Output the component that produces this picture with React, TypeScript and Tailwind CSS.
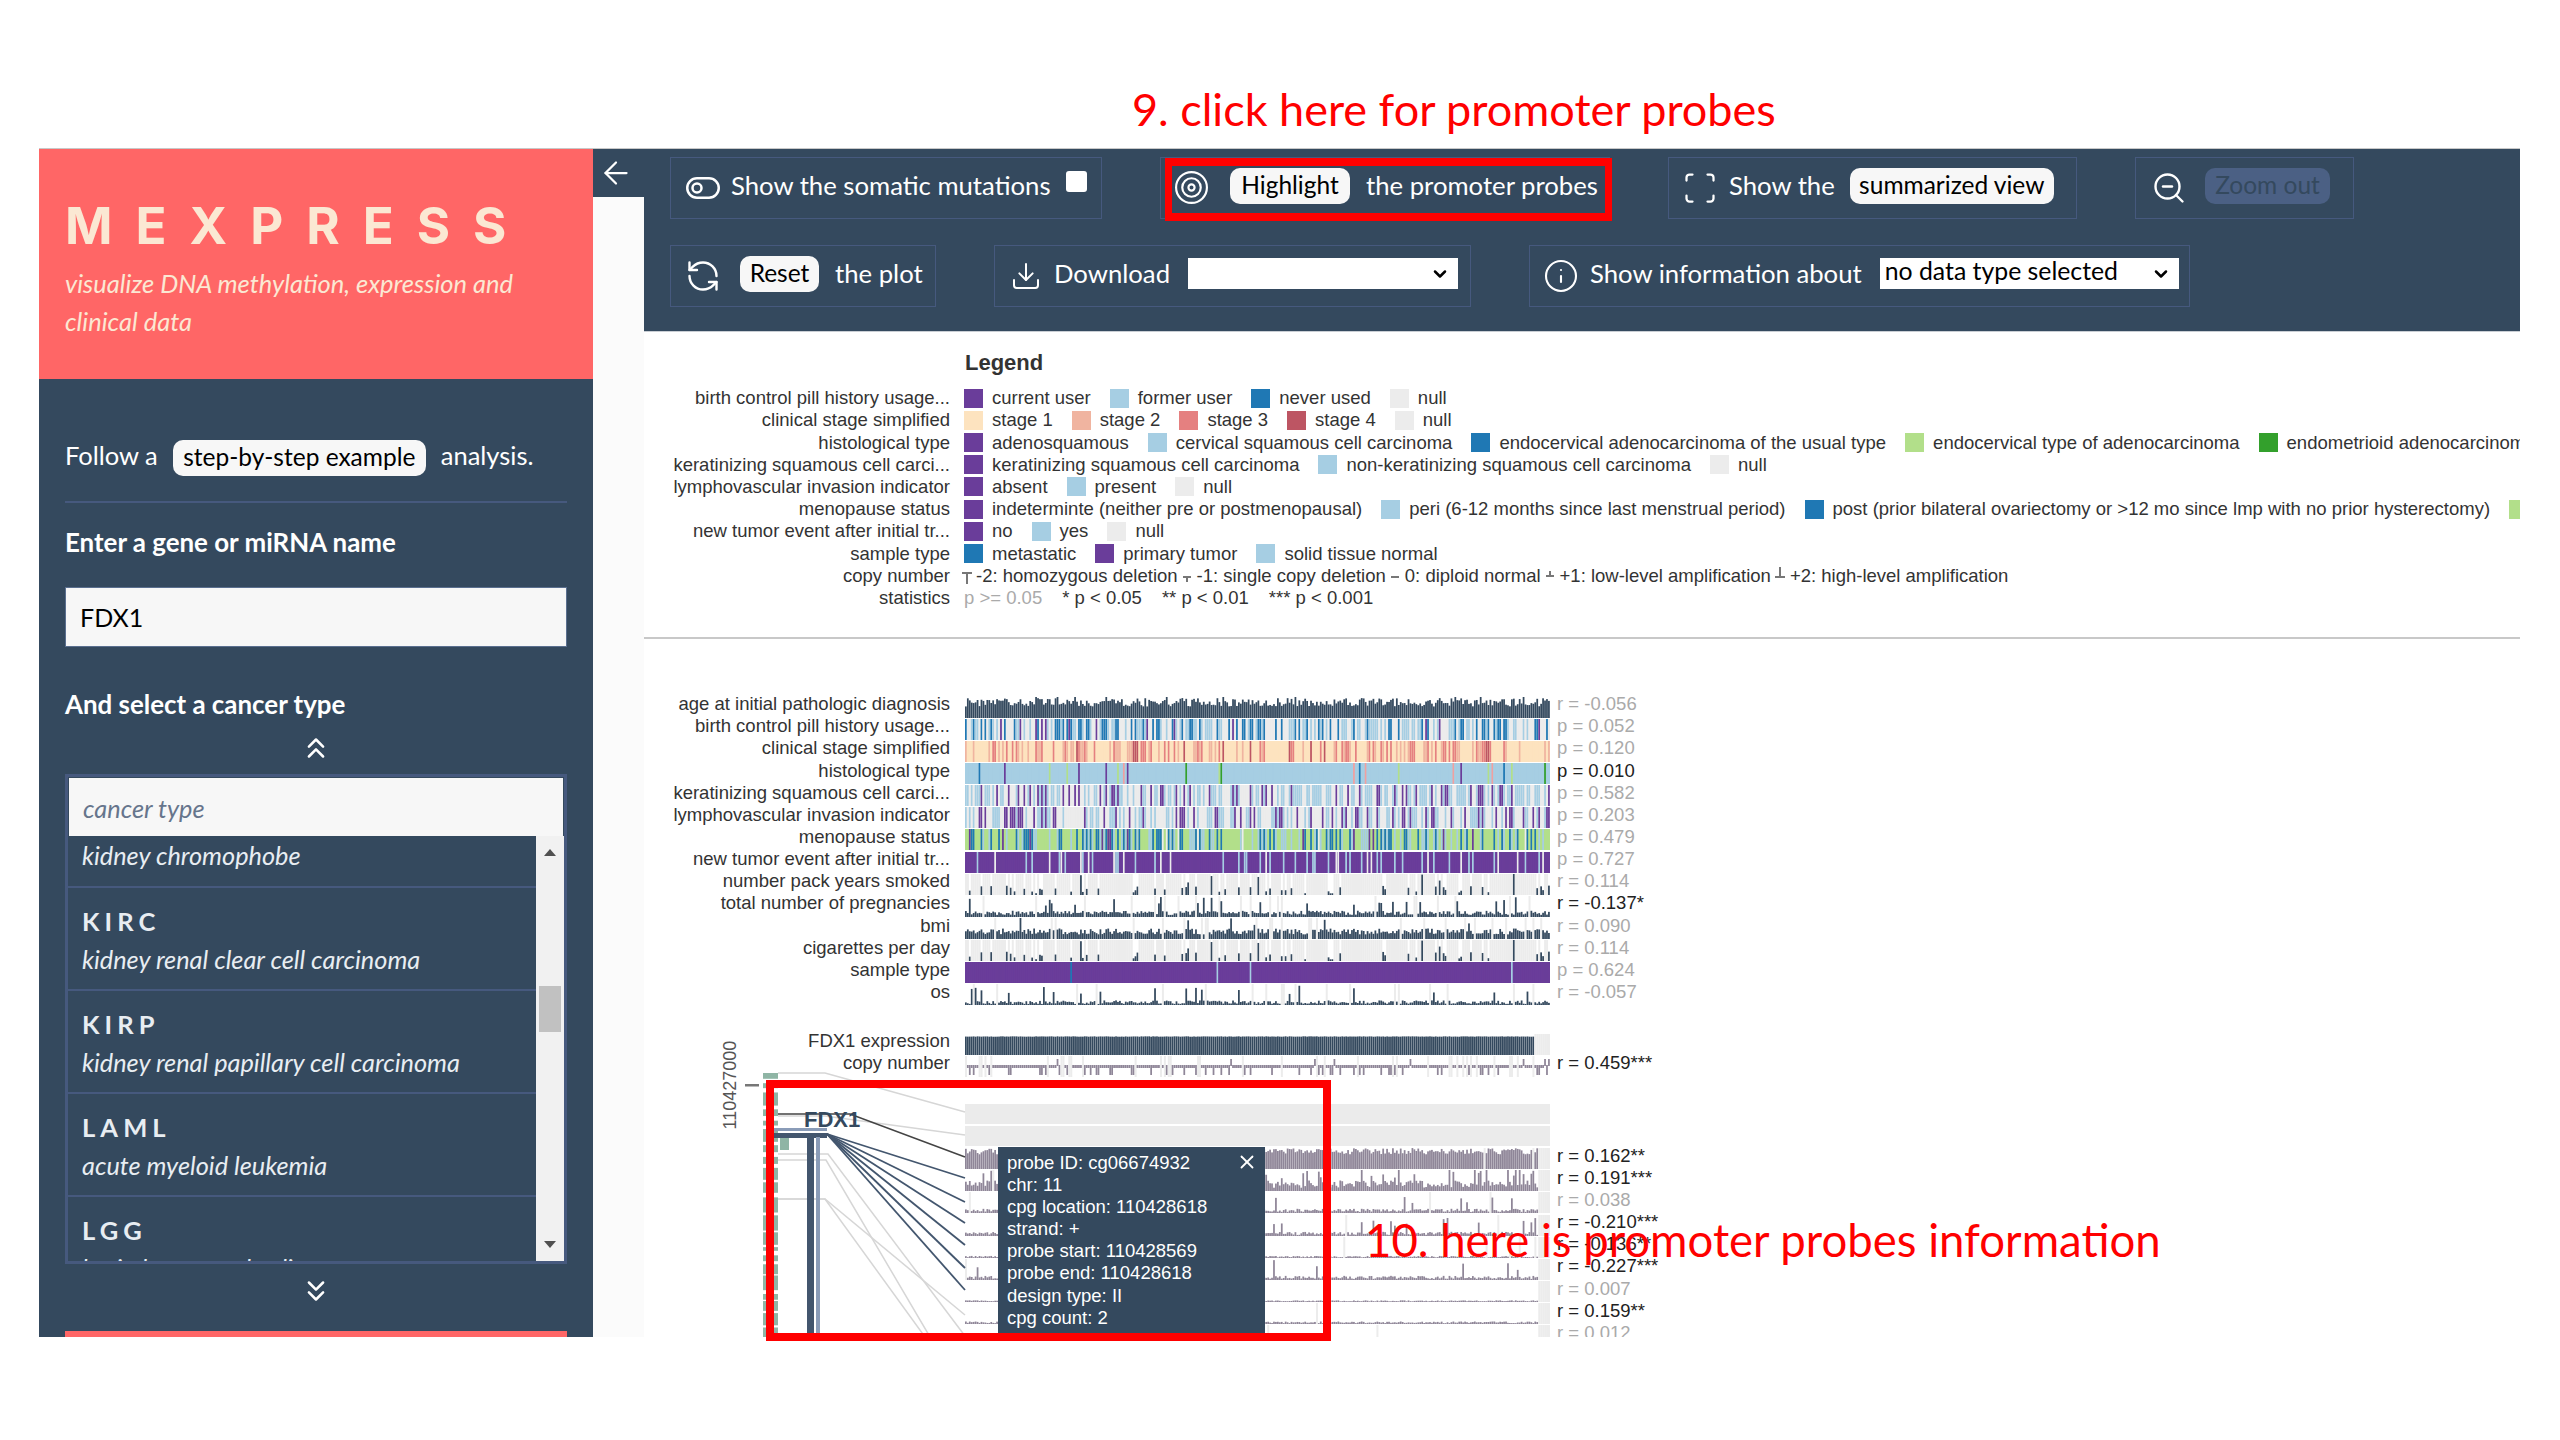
import { ArrowLeft, ChevronDown, ChevronsDown, ChevronsUp, Download, Info, RefreshCcw, Scan, Target, X, ZoomOut } from "lucide-react"

const PURPLE = "#6a3d9a"
const LIGHT = "#a6cee3"
const BLUE = "#1f78b4"
const GREEN = "#b2df8a"
const NULLC = "#ececec"
const DARK = "#34495e"
const MAUVE = "#8f8698"

// seeded random so the plots come out the same every time
function makeRng(seed: number) {
  let a = seed
  return () => {
    a = (a + 0x6d2b79f5) | 0
    let t = Math.imul(a ^ (a >>> 15), 1 | a)
    t = (t + Math.imul(t ^ (t >>> 7), 61 | t)) ^ t
    return ((t ^ (t >>> 14)) >>> 0) / 4294967296
  }
}

const SAMPLES = 300
const STEP = 585 / SAMPLES

function CategoryStrip({ seed, weights }: { seed: number; weights: [string, number][] }) {
  const rand = makeRng(seed)
  const total = weights.reduce((s, w) => s + w[1], 0)
  const bars = Array.from({ length: SAMPLES }, () => {
    let r = rand() * total
    for (const [color, weight] of weights) {
      r -= weight
      if (r <= 0) return color
    }
    return weights[0][0]
  })
  return (
    <svg width={585} height={21} className="block shrink-0">
      <rect width={585} height={21} fill={weights[0][0]} />
      {bars.map((c, i) => (
        <rect key={i} x={i * STEP} width={STEP - 0.2} height={21} fill={c} />
      ))}
    </svg>
  )
}

function BarStrip(props: { seed: number; nullRate: number; min: number; max: number; tallRate?: number; color?: string; stop?: number }) {
  const { seed, nullRate, min, max, tallRate = 0, color = DARK, stop = SAMPLES } = props
  const rand = makeRng(seed)
  const bars = Array.from({ length: SAMPLES }, () => {
    const isNull = rand() < nullRate
    let v = min + rand() * (max - min)
    if (rand() < tallRate) v = Math.min(1, v + 0.35 + rand() * 0.4)
    return { isNull, v }
  })
  return (
    <svg width={585} height={21} className="block shrink-0">
      {bars.map((b, i) =>
        b.isNull || i >= stop ? (
          <rect key={i} x={i * STEP} width={STEP} height={21} fill={NULLC} />
        ) : (
          <rect key={i} x={i * STEP} y={21 * (1 - b.v)} width={STEP - 0.2} height={21 * b.v} fill={color} />
        ),
      )}
    </svg>
  )
}

function CopyStrip() {
  const rand = makeRng(77)
  const bars = Array.from({ length: SAMPLES }, () => ({ r: rand(), n: rand() < 0.1 }))
  return (
    <svg width={585} height={21} className="block shrink-0">
      {bars.map((b, i) => {
        if (b.n) return <rect key={i} x={i * STEP} width={STEP} height={21} fill={NULLC} />
        const y = b.r > 0.97 ? 3 : 9
        const h = b.r < 0.25 ? 10 : b.r > 0.97 ? 7 : 3
        return <rect key={i} x={i * STEP} y={y} width={STEP - 0.2} height={h} fill={MAUVE} />
      })}
    </svg>
  )
}

function Swatch({ color, label }: { color: string; label: string }) {
  return (
    <span className="mr-[19px] flex shrink-0 items-center">
      <span className="mr-[9px] h-[19px] w-[19px] shrink-0" style={{ backgroundColor: color }} />
      {label}
    </span>
  )
}

function LegendRow({ label, children }: { label: string; children: React.ReactNode }) {
  return (
    <div className="flex h-[22.2px] items-center whitespace-nowrap">
      <div className="w-[306px] shrink-0 text-right">{label}</div>
      <div className="ml-[14px] flex items-center">{children}</div>
    </div>
  )
}

function CopyGlyph({ d }: { d: string }) {
  return (
    <svg width={12} height={20} viewBox="0 0 12 20" className="mx-[3.5px] shrink-0">
      <path d={d} fill="#777" />
    </svg>
  )
}

function PlotRow({ label, value, strong, children }: { label?: string; value?: string; strong?: boolean; children: React.ReactNode }) {
  return (
    <div className="flex h-[22.15px] items-center whitespace-nowrap">
      <div className="w-[306px] shrink-0 -translate-y-[3px] text-right">{label}</div>
      <div className="ml-[15px] shrink-0">{children}</div>
      <div className={"ml-[7px] -translate-y-[3px] " + (strong ? "text-[#222]" : "text-[#aaa]")}>{value}</div>
    </div>
  )
}

function Box({ width, children }: { width: string; children: React.ReactNode }) {
  return <div className={"flex h-[62px] shrink-0 items-center border border-[#46597e] pb-[5px] " + width}>{children}</div>
}

function ActionButton({ children, className = "" }: { children: React.ReactNode; className?: string }) {
  return <span className={"flex h-[36px] shrink-0 items-center justify-center rounded-[10px] bg-[#f7f7f7] text-[24.5px] text-black " + className}>{children}</span>
}

function NativeSelect({ width, margin, children }: { width: string; margin: string; children?: React.ReactNode }) {
  return (
    <span className={"relative shrink-0 " + margin}>
      <select className={"block h-[31px] appearance-none bg-white pb-[5px] pl-[5px] text-[24.8px] leading-[26px] text-black " + width}>{children}</select>
      <ChevronDown size={20} strokeWidth={3} className="absolute top-[6px] right-[8px] text-black" />
    </span>
  )
}

function CancerItem({ code, name }: { code: string; name: string }) {
  return (
    <div className="h-[103px] shrink-0 border-b-2 border-[#46597e] px-[14px] pt-[16px]">
      <div className="h-[34px] text-[25.5px] leading-[34px] font-bold tracking-[0.2em]">{code}</div>
      <div className="mt-[4px] h-[34px] text-[25.3px] leading-[34px] italic">{name}</div>
    </div>
  )
}

// gene model next to the probe rows, coordinates are page pixels
function GeneDiagram() {
  const rand = makeRng(9)
  const track: number[][] = []
  let y = 1073
  while (y < 1337) {
    const h = 3 + rand() * 14
    track.push([y, h])
    y += h + 1 + rand() * 4
  }
  const fan = [1178, 1202, 1223, 1245, 1268, 1290]
  return (
    <svg width={330} height={310} viewBox="644 1030 330 310" className="absolute top-[391px] left-0">
      {track.map(([ty, th], i) => (
        <rect key={i} x={763} y={ty} width={15} height={th} fill="#8fb5a5" />
      ))}
      <rect x={780} y={1135} width={9} height={15} fill="#8fb5a5" />
      <rect x={745} y={1084} width={14} height={2.5} fill="#777" />
      <text x={736} y={1085} transform="rotate(-90 736 1085)" textAnchor="middle" fontSize={18} fill="#555" fontFamily="Liberation Sans">110427000</text>
      <g stroke="#d6d6d6" strokeWidth={1.5} fill="none">
        <path d="M778 1073H825L965 1112" />
        <path d="M778 1116H825L965 1135" />
        <path d="M778 1199H825L965 1315" />
        <path d="M778 1154H828L965 1336" />
        <path d="M778 1160H826L930 1337" />
        <path d="M778 1199H825L925 1337" />
      </g>
      <path d="M778 1114H850L965 1157" stroke="#444" strokeWidth={1.6} fill="none" />
      <rect x={770} y={1128} width={57} height={3} fill="#8a9cb8" />
      <rect x={770} y={1133} width={57} height={5} fill="#43566e" />
      <rect x={807} y={1137} width={7} height={200} fill="#43566e" />
      <rect x={816} y={1137} width={4} height={200} fill="#8a9cb8" />
      {fan.map((fy) => (
        <line key={fy} x1={827} y1={1134} x2={965} y2={fy} stroke="#43566e" strokeWidth={1.8} />
      ))}
      <text x={804} y={1127} fontSize={22} fontWeight={700} fill="#34495e" fontFamily="Liberation Sans">FDX1</text>
    </svg>
  )
}

export default function App() {
  const probeValues: [string, boolean][] = [
    ["r = 0.162**", true],
    ["r = 0.191***", true],
    ["r = 0.038", false],
    ["r = -0.210***", true],
    ["r = -0.136**", true],
    ["r = -0.227***", true],
    ["r = 0.007", false],
    ["r = 0.159**", true],
    ["r = 0.012", false],
  ]
  const probeBars = [
    { min: 0.7, max: 1, tallRate: 0 },
    { min: 0.15, max: 0.5, tallRate: 0.2 },
    { min: 0.05, max: 0.2, tallRate: 0.05 },
    { min: 0.05, max: 0.2, tallRate: 0.06 },
    { min: 0.03, max: 0.1, tallRate: 0 },
    { min: 0.05, max: 0.2, tallRate: 0.03 },
    { min: 0.03, max: 0.08, tallRate: 0 },
    { min: 0.04, max: 0.12, tallRate: 0 },
    { min: 0.03, max: 0.08, tallRate: 0 },
  ]

  return (
    <div className="relative h-[1440px] w-[2560px] overflow-hidden bg-white font-['Lato',sans-serif]">
      <div className="pt-[148px] pl-[39px]">
        <div className="flex h-[1189px] w-[2481px] overflow-hidden border-t border-[#c8c8c8]">
          {/* Sidebar */}
          <aside className="w-[554px] shrink-0 overflow-hidden bg-[#34495e] text-white">
            <div className="h-[230px] bg-[#ff6666] px-[26px] pt-[47px] text-[#fbe8d3]">
              <h1 className="h-[60px] font-['Inter',sans-serif] text-[51px] leading-[60px] font-bold tracking-[23px] whitespace-nowrap">MEXPRESS</h1>
              <p className="mt-[8px] text-[25.5px] leading-[38px] whitespace-nowrap italic">
                visualize DNA methylation, expression and
                <br />
                clinical data
              </p>
            </div>

            <div className="px-[26px]">
              <div className="mt-[60px] flex h-[37px] items-center text-[25.5px] whitespace-nowrap">
                <span className="-translate-y-[2px]">Follow a</span>
                <ActionButton className="mx-[15px] w-[253px]">step-by-step example</ActionButton>
                <span className="-translate-y-[2px]">analysis.</span>
              </div>
              <div className="mt-[25px] h-[2px] bg-[#46597e]" />
              <h2 className="mt-[24px] h-[30px] text-[25.9px] leading-[30px] font-bold whitespace-nowrap">Enter a gene or miRNA name</h2>
              <input
                readOnly
                value="FDX1"
                className="mt-[30px] block h-[60px] w-[502px] border border-[#5a6f8f] bg-[#f7f7f7] px-[14px] text-[25px] text-black"
              />
              <h2 className="mt-[42px] h-[30px] text-[25.9px] leading-[30px] font-bold whitespace-nowrap">And select a cancer type</h2>
              <div className="mt-[12px] flex justify-center">
                <ChevronsUp size={34} strokeWidth={1.8} />
              </div>

              <div className="mt-[9px] flex h-[490px] w-[502px] flex-col overflow-hidden border-[3px] border-[#46597e]">
                <div className="mx-[1px] mt-[1px] flex h-[58px] shrink-0 items-center bg-[#f7f7f7] px-[14px] pt-[3px] text-[25.3px] text-[#66758c] italic">cancer type</div>
                <div className="flex min-h-0 flex-1 overflow-hidden">
                  <div className="flex w-[468px] shrink-0 flex-col text-[#e8edf2]">
                    <div className="h-[52px] shrink-0 border-b-2 border-[#46597e] px-[14px] text-[25.3px] leading-[38px] italic">kidney chromophobe</div>
                    <CancerItem code="KIRC" name="kidney renal clear cell carcinoma" />
                    <CancerItem code="KIRP" name="kidney renal papillary cell carcinoma" />
                    <CancerItem code="LAML" name="acute myeloid leukemia" />
                    <CancerItem code="LGG" name="brain lower grade glioma" />
                  </div>
                  <div className="flex w-[28px] shrink-0 flex-col items-center bg-[#f1f1f1]">
                    <span className="mt-[13px] h-0 w-0 border-x-[6px] border-b-[7px] border-x-transparent border-b-[#505050]" />
                    <span className="mt-[130px] h-[46px] w-[22px] bg-[#c1c1c1]" />
                    <span className="mt-auto mb-[13px] h-0 w-0 border-x-[6px] border-t-[7px] border-x-transparent border-t-[#505050]" />
                  </div>
                </div>
              </div>

              <div className="mt-[10px] flex justify-center">
                <ChevronsDown size={34} strokeWidth={1.8} />
              </div>
              <div className="mt-[23px] h-[20px] bg-[#ff6666]" />
            </div>
          </aside>

          {/* Back button strip */}
          <div className="w-[51px] shrink-0 bg-[#fbfbfb]">
            <div className="flex h-[48px] items-center justify-center bg-[#34495e] pr-[6px] text-white">
              <ArrowLeft size={36} strokeWidth={1.5} />
            </div>
          </div>

          <main className="min-w-0 flex-1 overflow-hidden font-['Liberation_Sans',sans-serif] text-[18.5px] text-[#333]">
            {/* Toolbar */}
            <div className="h-[183px] border-b border-[#c9ced4] bg-[#34495e] px-[26px] pt-[8px] font-['Lato',sans-serif] text-[25.7px] whitespace-nowrap text-white">
              <div className="flex gap-[58px]">
                <Box width="w-[432px]">
                  <svg width={34} height={22} viewBox="0 0 34 22" fill="none" stroke="currentColor" strokeWidth={2.5} className="ml-[15px] translate-y-[2px]">
                    <rect x={1.25} y={1.25} width={31.5} height={19.5} rx={9.75} />
                    <circle cx={11} cy={11} r={4.5} />
                  </svg>
                  <span className="ml-[11px]">Show the somatic mutations</span>
                  <span className="ml-[15px] h-[21px] w-[21px] -translate-y-[4px] rounded-[3px] bg-white" />
                </Box>
                <Box width="w-[450px]">
                  <Target size={37} strokeWidth={1.4} className="ml-[12px] translate-y-[2px]" />
                  <ActionButton className="ml-[20px] w-[120px]">Highlight</ActionButton>
                  <span className="ml-[16px]">the promoter probes</span>
                </Box>
                <Box width="w-[409px]">
                  <Scan size={36} strokeWidth={1.5} className="ml-[13px] translate-y-[2px]" />
                  <span className="ml-[11px]">Show the</span>
                  <ActionButton className="ml-[15px] w-[204px]">summarized view</ActionButton>
                </Box>
                <Box width="w-[219px]">
                  <ZoomOut size={36} strokeWidth={1.6} className="ml-[15px] translate-y-[2px]" />
                  <span className="ml-[18px] flex h-[36px] w-[125px] items-center justify-center rounded-[10px] bg-[#4b6084] text-[24.5px] text-[#34495e]">Zoom out</span>
                </Box>
              </div>
              <div className="mt-[26px] flex gap-[58px]">
                <Box width="w-[266px]">
                  <RefreshCcw size={36} strokeWidth={1.6} className="ml-[14px] translate-y-[2px]" />
                  <ActionButton className="ml-[19px] w-[79px]">Reset</ActionButton>
                  <span className="ml-[16px]">the plot</span>
                </Box>
                <Box width="w-[477px]">
                  <Download size={32} strokeWidth={1.5} className="ml-[15px] translate-y-[2px]" />
                  <span className="ml-[12px]">Download</span>
                  <NativeSelect margin="ml-[18px]" width="w-[270px]" />
                </Box>
                <Box width="w-[661px]">
                  <Info size={36} strokeWidth={1.4} className="ml-[13px] translate-y-[2px]" />
                  <span className="ml-[11px]">Show information about</span>
                  <NativeSelect margin="ml-[18px]" width="w-[299px]">
                    <option>no data type selected</option>
                  </NativeSelect>
                </Box>
              </div>
            </div>

            {/* Legend */}
            <div className="h-[305px]">
              <div className="ml-[321px] pt-[18px] text-[22px] leading-[26px] font-bold text-[#333]">Legend</div>
              <div className="mt-[11px]">
                <LegendRow label="birth control pill history usage...">
                  <Swatch color={PURPLE} label="current user" />
                  <Swatch color={LIGHT} label="former user" />
                  <Swatch color={BLUE} label="never used" />
                  <Swatch color={NULLC} label="null" />
                </LegendRow>
                <LegendRow label="clinical stage simplified">
                  <Swatch color="#fde3bf" label="stage 1" />
                  <Swatch color="#f0b4a0" label="stage 2" />
                  <Swatch color="#e58080" label="stage 3" />
                  <Swatch color="#bd5563" label="stage 4" />
                  <Swatch color={NULLC} label="null" />
                </LegendRow>
                <LegendRow label="histological type">
                  <Swatch color={PURPLE} label="adenosquamous" />
                  <Swatch color={LIGHT} label="cervical squamous cell carcinoma" />
                  <Swatch color={BLUE} label="endocervical adenocarcinoma of the usual type" />
                  <Swatch color={GREEN} label="endocervical type of adenocarcinoma" />
                  <Swatch color="#33a02c" label="endometrioid adenocarcinoma" />
                </LegendRow>
                <LegendRow label="keratinizing squamous cell carci...">
                  <Swatch color={PURPLE} label="keratinizing squamous cell carcinoma" />
                  <Swatch color={LIGHT} label="non-keratinizing squamous cell carcinoma" />
                  <Swatch color={NULLC} label="null" />
                </LegendRow>
                <LegendRow label="lymphovascular invasion indicator">
                  <Swatch color={PURPLE} label="absent" />
                  <Swatch color={LIGHT} label="present" />
                  <Swatch color={NULLC} label="null" />
                </LegendRow>
                <LegendRow label="menopause status">
                  <Swatch color={PURPLE} label="indeterminte (neither pre or postmenopausal)" />
                  <Swatch color={LIGHT} label="peri (6-12 months since last menstrual period)" />
                  <Swatch color={BLUE} label="post (prior bilateral ovariectomy or >12 mo since lmp with no prior hysterectomy)" />
                  <Swatch color={GREEN} label="pre" />
                </LegendRow>
                <LegendRow label="new tumor event after initial tr...">
                  <Swatch color={PURPLE} label="no" />
                  <Swatch color={LIGHT} label="yes" />
                  <Swatch color={NULLC} label="null" />
                </LegendRow>
                <LegendRow label="sample type">
                  <Swatch color={BLUE} label="metastatic" />
                  <Swatch color={PURPLE} label="primary tumor" />
                  <Swatch color={LIGHT} label="solid tissue normal" />
                </LegendRow>
                <LegendRow label="copy number">
                  <span className="-ml-[7px] flex items-center">
                    <CopyGlyph d="M1 6h10v2H7v10H5V8H1z" />
                    <span>-2: homozygous deletion</span>
                    <CopyGlyph d="M2 10h8v2H7v4H5v-4H2z" />
                    <span>-1: single copy deletion</span>
                    <CopyGlyph d="M2 10h8v2H2z" />
                    <span>0: diploid normal</span>
                    <CopyGlyph d="M5 5h2v4h3v2H2V9h3z" />
                    <span>+1: low-level amplification</span>
                    <CopyGlyph d="M5 1h2v9h4v2H1v-2h4z" />
                    <span>+2: high-level amplification</span>
                  </span>
                </LegendRow>
                <LegendRow label="statistics">
                  <span className="flex gap-[20px]">
                    <span className="text-[#aaa]">p &gt;= 0.05</span>
                    <span>* p &lt; 0.05</span>
                    <span>** p &lt; 0.01</span>
                    <span>*** p &lt; 0.001</span>
                  </span>
                </LegendRow>
              </div>
            </div>
            <div className="h-[2px] bg-[#c8c8c8]" />

            {/* Plot */}
            <div className="relative pt-[57px]">
              <PlotRow label="age at initial pathologic diagnosis" value="r = -0.056"><BarStrip seed={1} nullRate={0} min={0.55} max={0.95} tallRate={0.04} /></PlotRow>
              <PlotRow label="birth control pill history usage..." value="p = 0.052"><CategoryStrip seed={2} weights={[[NULLC, 38], [LIGHT, 32], [BLUE, 25], [PURPLE, 5]]} /></PlotRow>
              <PlotRow label="clinical stage simplified" value="p = 0.120"><CategoryStrip seed={3} weights={[["#fde3bf", 60], ["#f0b4a0", 18], ["#e58080", 18], ["#bd5563", 4]]} /></PlotRow>
              <PlotRow label="histological type" value="p = 0.010" strong><CategoryStrip seed={4} weights={[[LIGHT, 94], [GREEN, 2], [BLUE, 1.5], [PURPLE, 0.8], ["#f0a0a0", 1.4], ["#33a02c", 0.3]]} /></PlotRow>
              <PlotRow label="keratinizing squamous cell carci..." value="p = 0.582"><CategoryStrip seed={5} weights={[[NULLC, 36], [LIGHT, 42], [PURPLE, 22]]} /></PlotRow>
              <PlotRow label="lymphovascular invasion indicator" value="p = 0.203"><CategoryStrip seed={6} weights={[[NULLC, 44], [LIGHT, 36], [PURPLE, 20]]} /></PlotRow>
              <PlotRow label="menopause status" value="p = 0.479"><CategoryStrip seed={7} weights={[[GREEN, 50], [BLUE, 22], [LIGHT, 24], [PURPLE, 2], [NULLC, 2]]} /></PlotRow>
              <PlotRow label="new tumor event after initial tr..." value="p = 0.727"><CategoryStrip seed={8} weights={[[PURPLE, 78], [LIGHT, 14], [NULLC, 8]]} /></PlotRow>
              <PlotRow label="number pack years smoked" value="r = 0.114"><BarStrip seed={21} nullRate={0.78} min={0.08} max={0.45} tallRate={0.12} /></PlotRow>
              <PlotRow label="total number of pregnancies" value="r = -0.137*" strong><BarStrip seed={10} nullRate={0.08} min={0.1} max={0.3} tallRate={0.08} /></PlotRow>
              <PlotRow label="bmi" value="r = 0.090"><BarStrip seed={11} nullRate={0.07} min={0.22} max={0.5} tallRate={0.02} /></PlotRow>
              <PlotRow label="cigarettes per day" value="r = 0.114"><BarStrip seed={21} nullRate={0.78} min={0.08} max={0.45} tallRate={0.12} /></PlotRow>
              <PlotRow label="sample type" value="p = 0.624"><CategoryStrip seed={13} weights={[[PURPLE, 98.5], [LIGHT, 1], [BLUE, 0.5]]} /></PlotRow>
              <PlotRow label="os" value="r = -0.057"><BarStrip seed={14} nullRate={0.05} min={0.05} max={0.22} tallRate={0.08} /></PlotRow>

              <div className="mt-[27px]">
                <PlotRow label="FDX1 expression"><BarStrip seed={15} nullRate={0} min={0.87} max={0.89} stop={292} /></PlotRow>
                <PlotRow label="copy number" value="r = 0.459***" strong><CopyStrip /></PlotRow>
              </div>

              <div className="mt-[26px]">
                <PlotRow><div className="h-[20px] w-[585px] bg-[#ebebeb]" /></PlotRow>
                <PlotRow><div className="h-[20px] w-[585px] bg-[#ebebeb]" /></PlotRow>
                {probeValues.map(([value, strong], i) => (
                  <PlotRow key={value} value={value} strong={strong}>
                    <BarStrip seed={30 + i} nullRate={0.01} min={probeBars[i].min} max={probeBars[i].max} tallRate={probeBars[i].tallRate} color={MAUVE} stop={294} />
                  </PlotRow>
                ))}
              </div>

              <GeneDiagram />

              {/* Probe tooltip */}
              <div className="absolute top-[508px] left-[354px] h-[200px] w-[267px] bg-[#34495e] px-[9px] pt-[5px] text-[18.5px] leading-[22.1px] text-white">
                <X size={22} strokeWidth={2} className="absolute top-[4px] right-[7px]" />
                <div>probe ID: cg06674932</div>
                <div>chr: 11</div>
                <div>cpg location: 110428618</div>
                <div>strand: +</div>
                <div>probe start: 110428569</div>
                <div>probe end: 110428618</div>
                <div>design type: II</div>
                <div>cpg count: 2</div>
              </div>
            </div>
          </main>
        </div>
      </div>

      {/* Annotations on top of the screenshot */}
      <div className="absolute top-[158px] left-[1165px] h-[63px] w-[447px] border-x-[7px] border-y-[8px] border-[#ff0000]" />
      <div className="absolute top-[1080px] left-[766px] h-[261px] w-[565px] border-[8px] border-[#ff0000]" />
      <div className="absolute top-[82px] left-[1132px] text-[45px] leading-[54px] whitespace-nowrap text-[#ff0000]">9. click here for promoter probes</div>
      <div className="absolute top-[1213px] left-[1365px] text-[45.5px] leading-[54px] whitespace-nowrap text-[#ff0000]">10. here is promoter probes information</div>
    </div>
  )
}
